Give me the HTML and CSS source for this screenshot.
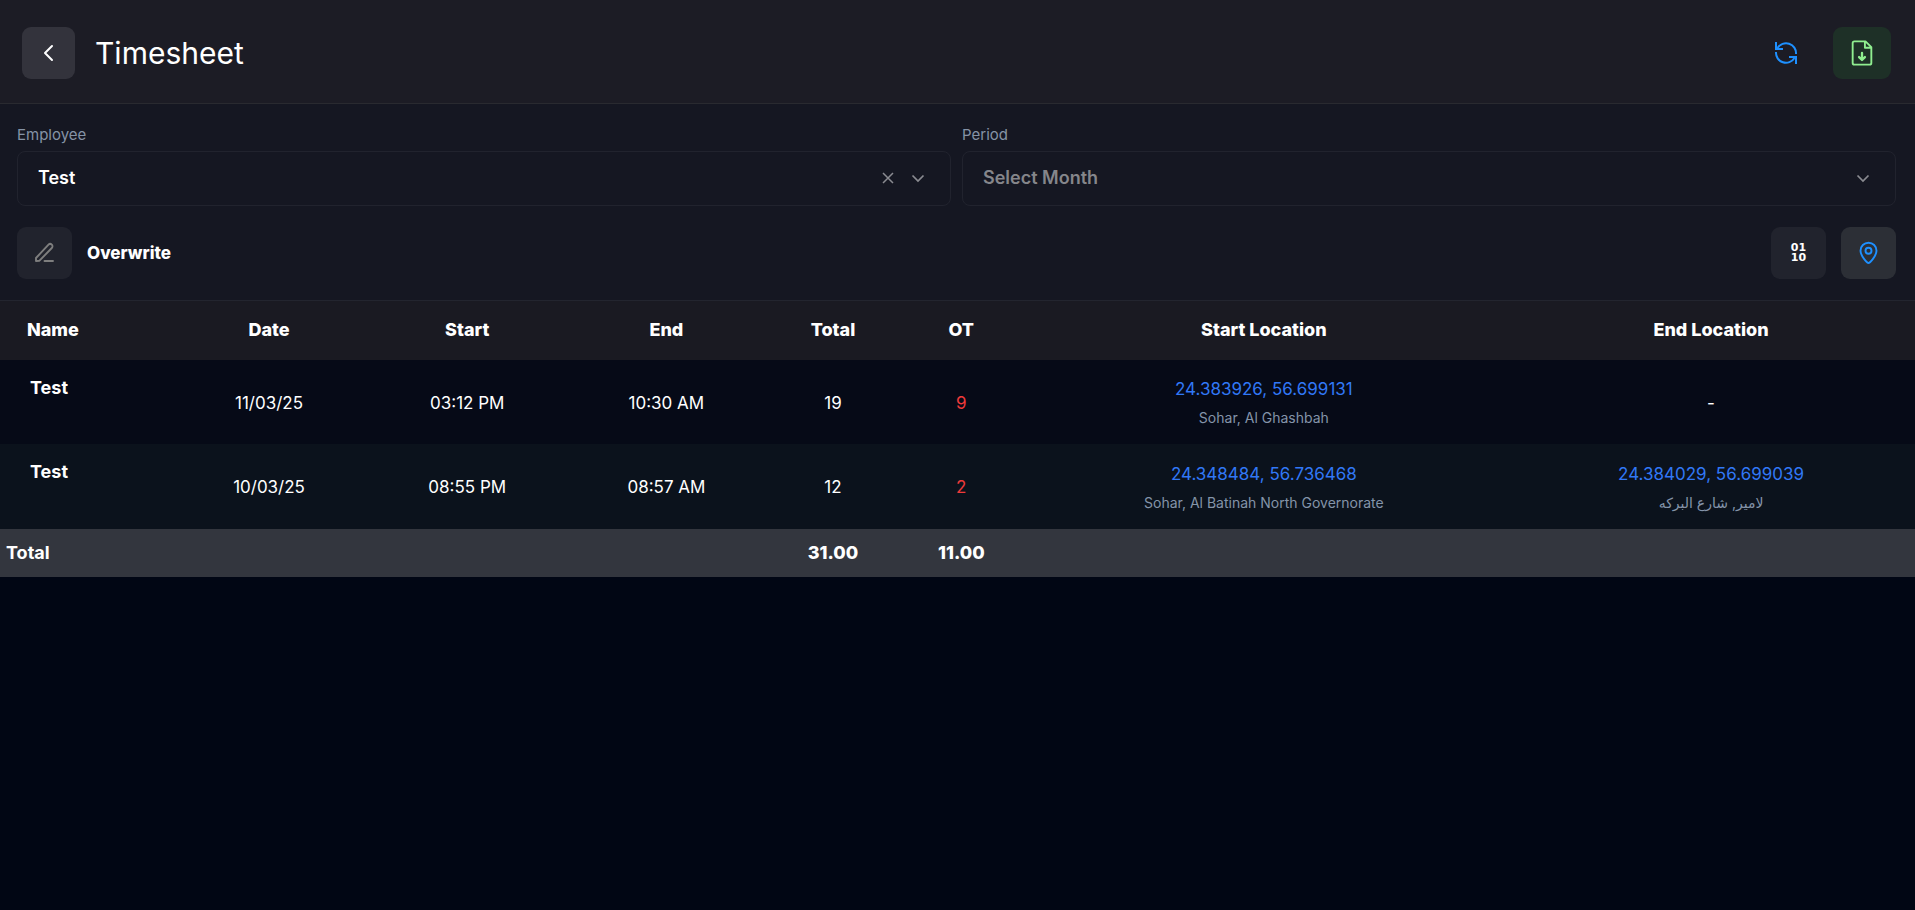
FILE: index.html
```html
<!DOCTYPE html>
<html lang="en">
<head>
<meta charset="utf-8">
<meta name="viewport" content="width=device-width, initial-scale=1">
<title>Timesheet</title>
<link rel="stylesheet" href="styles.css">
</head>
<body>
<header class="topbar">
  <button class="btn btn-back" type="button" aria-label="Back">
    <svg width="16" height="20" viewBox="0 0 16 20" fill="none" stroke="currentColor" stroke-width="2" stroke-linecap="round" stroke-linejoin="round"><path d="M11 3 4 10l7 7"/></svg>
  </button>
  <h1 class="title">Timesheet</h1>
  <div class="actions">
    <button class="btn btn-refresh" type="button" aria-label="Refresh">
      <svg width="24" height="24" viewBox="0 0 24 24" fill="none" stroke="currentColor" stroke-width="2"><path d="M22 13A10 10 0 0 0 3.500 7M2 1v7h7M2 11a10 10 0 0 0 18.500 6M22 23v-7h-7"/></svg>
    </button>
    <button class="btn btn-export" type="button" aria-label="Export">
      <svg width="28" height="28" viewBox="0 0 24 24" fill="none" stroke="currentColor" stroke-width="1.600" stroke-linecap="round" stroke-linejoin="round"><path d="M15 2H5.500A1.500 1.500 0 0 0 4 3.500v17A1.500 1.500 0 0 0 5.500 22h13a1.500 1.500 0 0 0 1.500-1.500V7zM14.500 2v5.500H20"/><path stroke-width="2" d="M12 12v6M9.500 15.500 12 18l2.500-2.500"/></svg>
    </button>
  </div>
</header>

<section class="controls">
  <div class="filters">
    <div class="field">
      <label class="label" for="employee">Employee</label>
      <div class="box">
        <select class="select" id="employee"><option>Test</option></select>
        <button class="clear" type="button" aria-label="Clear employee">
          <svg width="14" height="14" viewBox="0 0 14 14" fill="none" stroke="currentColor" stroke-width="1.500"><path d="M2 1l10 10M12 1 2 11"/></svg>
        </button>
        <svg class="chevron" width="14" height="14" viewBox="0 0 14 14" fill="none" stroke="currentColor" stroke-width="1.700"><path d="M1.500 3.500 7 9l5.500-5.500"/></svg>
      </div>
    </div>
    <div class="field">
      <label class="label" for="period">Period</label>
      <div class="box">
        <select class="select select-empty" id="period"><option>Select Month</option></select>
        <svg class="chevron" width="14" height="14" viewBox="0 0 14 14" fill="none" stroke="currentColor" stroke-width="1.700"><path d="M1.500 3.500 7 9l5.500-5.500"/></svg>
      </div>
    </div>
  </div>
  <div class="toolbar">
    <button class="btn tool tool-edit" id="overwrite" type="button" aria-labelledby="overwrite-label">
      <svg width="22" height="22" viewBox="0 0 22 22" fill="none" stroke="currentColor" stroke-width="1.900" stroke-linecap="round" stroke-linejoin="round"><path d="M2 19v-3L14.500 2.700a2.300 2.300 0 0 1 3.300 3.300L5.500 18.700zM10.500 19H19"/></svg>
    </button>
    <span class="tool-label" id="overwrite-label">Overwrite</span>
    <div class="tools">
      <button class="btn tool tool-binary" type="button" aria-label="Decimal format"><span>01</span><span>10</span></button>
      <button class="btn tool tool-pin" type="button" aria-label="Show locations">
        <svg width="24" height="24" viewBox="0 0 24 24" fill="none" stroke="currentColor" stroke-width="1.900" stroke-linejoin="round"><path d="M11.500 22c-1.200 0-8-7-8-12.300a8 8 0 0 1 16 0c0 5.300-6.800 12.300-8 12.300z"/><circle cx="11.500" cy="9.700" r="3"/></svg>
      </button>
    </div>
  </div>
</section>

<table class="sheet">
  <colgroup>
    <col class="c-name"><col class="c-date"><col class="c-start"><col class="c-end"><col class="c-total"><col class="c-ot"><col class="c-from"><col class="c-to">
  </colgroup>
  <thead>
    <tr><th>Name</th><th>Date</th><th>Start</th><th>End</th><th>Total</th><th>OT</th><th>Start Location</th><th>End Location</th></tr>
  </thead>
  <tbody>
    <tr>
      <td class="name">Test</td><td>11/03/25</td><td>03:12 PM</td><td>10:30 AM</td><td>19</td><td class="ot">9</td>
      <td><a class="coords" href="#">24.383926, 56.699131</a><div class="place">Sohar, Al Ghashbah</div></td>
      <td>-</td>
    </tr>
    <tr>
      <td class="name">Test</td><td>10/03/25</td><td>08:55 PM</td><td>08:57 AM</td><td>12</td><td class="ot">2</td>
      <td><a class="coords" href="#">24.348484, 56.736468</a><div class="place">Sohar, Al Batinah North Governorate</div></td>
      <td><a class="coords" href="#">24.384029, 56.699039</a><div class="place" dir="rtl" lang="ar">لامير, شارع البركه</div></td>
    </tr>
  </tbody>
  <tfoot>
    <tr><th>Total</th><td></td><td></td><td></td><td>31.00</td><td>11.00</td><td></td><td></td></tr>
  </tfoot>
</table>
</body>
</html>
```
FILE: styles.css
```css
* { box-sizing: border-box; }

body {
  margin: 0;
  min-height: 100vh;
  background: #010614;
  color: #fff;
  font-family: Inter, "Noto Sans", "DejaVu Sans", sans-serif;
  font-size: 17px;
  line-height: 24px;
}

button, select { font: inherit; color: inherit; }
svg { display: block; flex: none; }

.btn {
  display: flex;
  align-items: center;
  justify-content: center;
  height: 52px;
  padding: 0;
  border: 0;
  border-radius: 9px;
  cursor: pointer;
}

.topbar {
  display: flex;
  align-items: center;
  padding: 27px 24px 24px 22px;
  background: #1c1c25;
  border-bottom: 1px solid #292a30;
}
.btn-back { width: 53px; background: #33333c; }
.title { margin: 0 0 0 20px; font-size: 30px; line-height: 40px; font-weight: 400; }
.actions { display: flex; gap: 19px; margin-left: auto; }
.btn-refresh { width: 56px; background: transparent; color: #1e90ff; }
.btn-export { width: 58px; background: #1e3027; color: #90ee90; }

.controls {
  padding: 18px 19px 21px 17px;
  background: #151722;
  border-bottom: 1px solid #23252f;
}
.filters { display: flex; gap: 11px; }
.field { flex: 1; min-width: 0; }
.label { display: block; padding-top: 3px; font-size: 15px; line-height: 20px; margin-bottom: 6px; color: #8593a6; }
.box {
  display: flex;
  align-items: center;
  height: 55px;
  padding-right: 25px;
  border: 1px solid #21232e;
  border-radius: 8px;
  color: #8a8b91;
}
.select {
  flex: 1;
  min-width: 0;
  height: 100%;
  padding: 0 20px 1px;
  border: 0;
  background: transparent;
  appearance: none;
  color: #fff;
  font-size: 18px;
  font-weight: 600;
}
.select-empty { color: #85868b; }
.clear { padding: 0; border: 0; background: transparent; margin-right: 16px; color: inherit; cursor: pointer; }

.toolbar { display: flex; align-items: center; gap: 15px; margin-top: 21px; }
.tool { width: 55px; background: #21232d; }
.tool-edit { color: #7e7e7e; }
.tool-label { padding-bottom: 1px; font-weight: 800; }
.tools { display: flex; gap: 15px; margin-left: auto; }
.tool-binary { flex-direction: column; font: 700 11px/10px "DejaVu Sans", sans-serif; }
.tool-pin { background: #2c2f36; color: #1e90ff; }

.sheet { width: 100%; table-layout: fixed; border-collapse: collapse; text-align: center; }
.c-name { width: 9%; }
.c-date { width: 10.1%; }
.c-start { width: 10.6%; }
.c-end { width: 10.2%; }
.c-total { width: 7.2%; }
.c-ot { width: 6.2%; }
.c-from { width: 25.4%; }
.c-to { width: 21.3%; }
.sheet th, .sheet td { padding: 0; }
.sheet th:first-child { text-align: left; }

.sheet thead { background: #1a1a22; }
.sheet thead th { height: 59px; padding-bottom: 1px; font-size: 18px; font-weight: 800; }
.sheet thead th:first-child { padding-left: 27px; }

.sheet tbody tr { height: 84px; background: #060a17; }
.sheet tbody tr:nth-child(even) { height: 85px; background: #0b121c; }
.sheet tbody td { padding: 16px 0 15px; vertical-align: middle; }
.sheet tbody .name { padding-left: 30px; text-align: left; vertical-align: top; font-size: 18px; font-weight: 700; }
.sheet .ot { color: #ef3a3a; }
.coords { display: block; color: #3178f6; text-decoration: none; }
.place { margin-top: 7px; font-size: 14px; line-height: 20px; color: #8494a9; }

.sheet tfoot { background: #33363e; font-size: 18px; font-weight: 800; }
.sheet tfoot th, .sheet tfoot td { height: 48px; }
.sheet tfoot th { padding-left: 6px; }
```
